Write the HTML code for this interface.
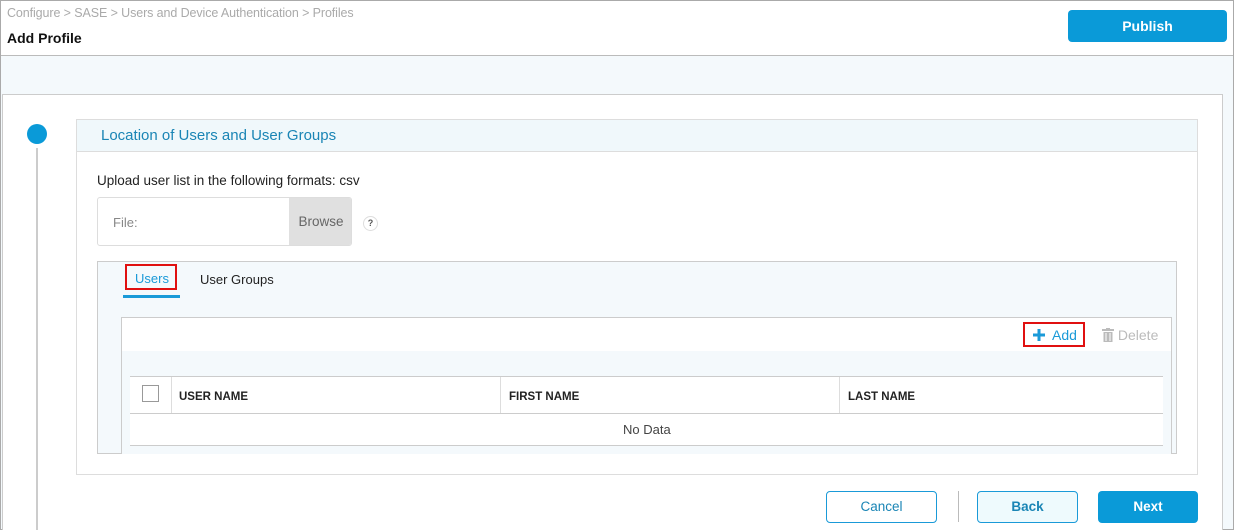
<!DOCTYPE html>
<html><head><style>
*{box-sizing:border-box;margin:0;padding:0}
body{width:1234px;height:530px;position:relative;background:#fff;font-family:"Liberation Sans",sans-serif;overflow:hidden;font-size:13px;color:#222}
.a{position:absolute}
</style></head><body>
<div class="a" style="left:0;top:0;width:1234px;height:530px;border:1px solid #aaa"></div>
<div class="a" style="left:7px;top:6px;color:#aaa;font-size:12.5px;letter-spacing:-0.1px">Configure &gt; SASE &gt; Users and Device Authentication &gt; Profiles</div>
<div class="a" style="left:7px;top:30px;color:#111;font-size:14px;font-weight:bold">Add Profile</div>
<div class="a" style="left:1068px;top:10px;width:159px;height:32px;background:#0a9ad8;border-radius:4px;color:#fff;font-weight:bold;font-size:14px;text-align:center;line-height:32px">Publish</div>
<div class="a" style="left:1px;top:55px;width:1232px;height:474px;background:#f4f9fc;border-top:1px solid #bbb"></div>
<div class="a" style="left:2px;top:94px;width:1221px;height:436px;background:#fff;border:1px solid #ccc;border-bottom:none"></div>
<div class="a" style="left:27px;top:124px;width:20px;height:20px;border-radius:50%;background:#0a9ad8"></div>
<div class="a" style="left:36px;top:148px;width:2px;height:382px;background:#ccc"></div>
<div class="a" style="left:76px;top:119px;width:1122px;height:356px;border:1px solid #ddd"></div>
<div class="a" style="left:77px;top:120px;width:1120px;height:32px;background:#f0f8fb;border-bottom:1px solid #ddd"></div>
<div class="a" style="left:101px;top:127px;color:#1a85b5;font-size:15px">Location of Users and User Groups</div>
<div class="a" style="left:97px;top:173px;font-size:13.5px">Upload user list in the following formats: csv</div>
<div class="a" style="left:97px;top:197px;width:255px;height:49px;border:1px solid #ddd;border-radius:3px;overflow:hidden"><div class="a" style="left:191px;top:0;width:64px;height:49px;background:#e0e0e0;color:#666;font-size:13.5px;line-height:47px;text-align:center">Browse</div><div class="a" style="left:15px;top:17px;color:#888">File:</div></div>
<div class="a" style="left:363px;top:216px;width:15px;height:15px;border-radius:50%;border:1px solid #ddd;font-size:9px;font-weight:bold;color:#555;text-align:center;line-height:13px">?</div>
<div class="a" style="left:97px;top:261px;width:1080px;height:193px;background:#f4f9fc;border:1px solid #ccc"></div>
<div class="a" style="left:125px;top:264px;width:52px;height:26px;border:2px solid #e01010"></div>
<div class="a" style="left:135px;top:271px;color:#1a9ad8">Users</div>
<div class="a" style="left:123px;top:295px;width:57px;height:3px;background:#1a9ad8"></div>
<div class="a" style="left:200px;top:272px;color:#222">User Groups</div>
<div class="a" style="left:121px;top:317px;width:1051px;height:137px;border:1px solid #ccc;border-bottom:none;background:#f4f9fc"></div>
<div class="a" style="left:122px;top:318px;width:1049px;height:33px;background:#fff"></div>
<div class="a" style="left:1023px;top:322px;width:62px;height:25px;border:2px solid #e01010"></div>
<svg class="a" style="left:1033px;top:329px" width="12" height="12" viewBox="0 0 12 12"><rect x="4.5" y="0" width="3" height="12" fill="#1a9ad8"/><rect x="0" y="4.5" width="12" height="3" fill="#1a9ad8"/></svg>
<div class="a" style="left:1052px;top:327px;color:#1a9ad8;font-size:14px">Add</div>
<div class="a" style="left:1102px;top:327px;color:#bbb;font-size:14px"><svg width="12" height="14" viewBox="0 0 12 14" style="vertical-align:-2px"><rect x="0" y="1" width="12" height="2" fill="#bbb"/><rect x="4" y="0" width="4" height="2" fill="#bbb"/><rect x="1.5" y="4" width="9" height="10" fill="#bbb"/><rect x="3.5" y="5" width="1" height="8" fill="#fff"/><rect x="7.5" y="5" width="1" height="8" fill="#fff"/></svg> Delete</div>
<div class="a" style="left:130px;top:376px;width:1033px;height:70px;background:#fff;border-top:1px solid #ccc;border-bottom:1px solid #ccc"></div>
<div class="a" style="left:130px;top:413px;width:1033px;height:1px;background:#ccc"></div>
<div class="a" style="left:171px;top:377px;width:1px;height:36px;background:#ddd"></div>
<div class="a" style="left:500px;top:377px;width:1px;height:36px;background:#ddd"></div>
<div class="a" style="left:839px;top:377px;width:1px;height:36px;background:#ddd"></div>
<div class="a" style="left:142px;top:385px;width:17px;height:17px;border:1px solid #999"></div>
<div class="a" style="left:179px;top:391px;font-size:11.5px;font-weight:bold;color:#222">USER NAME</div>
<div class="a" style="left:509px;top:391px;font-size:11.5px;font-weight:bold;color:#222">FIRST NAME</div>
<div class="a" style="left:848px;top:391px;font-size:11.5px;font-weight:bold;color:#222">LAST NAME</div>
<div class="a" style="left:623px;top:422px;color:#444">No Data</div>
<div class="a" style="left:826px;top:491px;width:111px;height:32px;border:1px solid #1a9ad8;border-radius:4px;color:#1a85b5;text-align:center;line-height:30px;font-size:13.5px">Cancel</div>
<div class="a" style="left:958px;top:491px;width:1px;height:31px;background:#bbb"></div>
<div class="a" style="left:977px;top:491px;width:101px;height:32px;border:1px solid #1a9ad8;border-radius:4px;background:#eefafd;color:#1a85b5;text-align:center;line-height:30px;font-size:13.5px;font-weight:bold">Back</div>
<div class="a" style="left:1098px;top:491px;width:100px;height:32px;background:#0a9ad8;border-radius:4px;color:#fff;text-align:center;line-height:32px;font-size:13.5px;font-weight:bold">Next</div>
</body></html>
